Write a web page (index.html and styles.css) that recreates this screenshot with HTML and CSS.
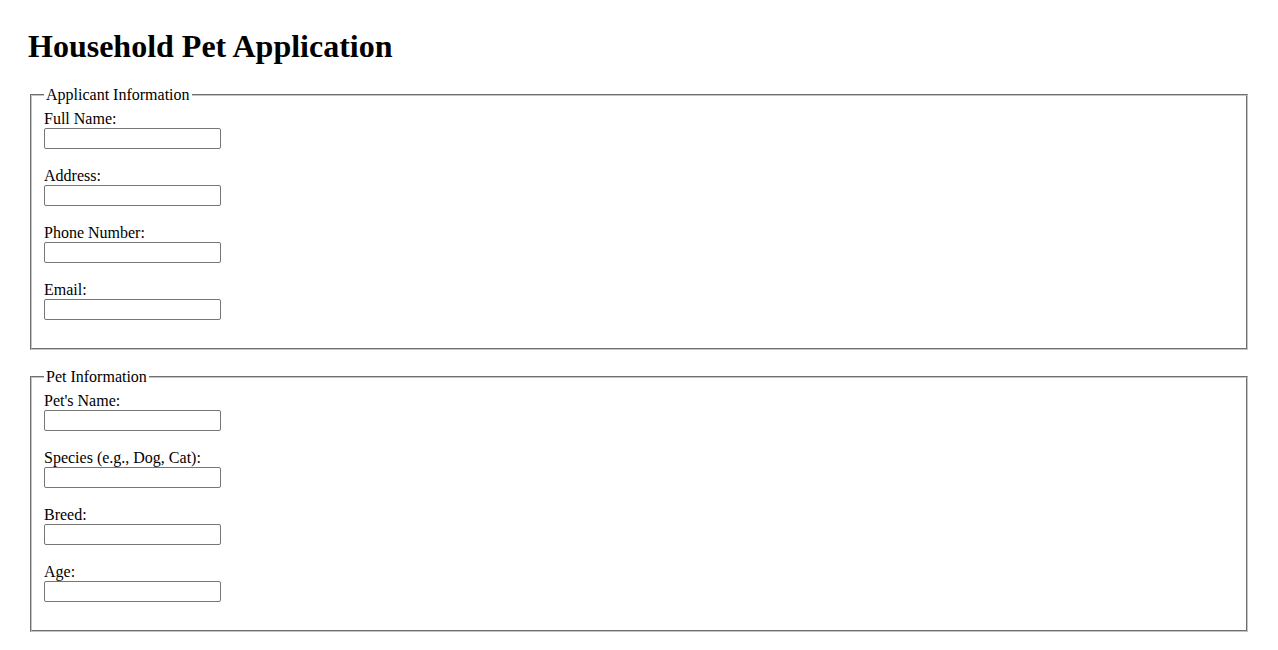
FILE: index.html
```html
<!DOCTYPE html>
<html lang="en">
<head>
<meta charset="utf-8">
<title>Household Pet Application</title>
<link rel="stylesheet" href="styles.css">
</head>
<body class="page">
<h1 class="title">Household Pet Application</h1>
<form class="form">
  <fieldset class="section">
    <legend class="section-legend">Applicant Information</legend>
    <div class="field"><label class="field-label" for="fullname">Full Name:</label><input class="field-input" type="text" id="fullname"></div>
    <div class="field"><label class="field-label" for="address">Address:</label><input class="field-input" type="text" id="address"></div>
    <div class="field"><label class="field-label" for="phone">Phone Number:</label><input class="field-input" type="text" id="phone"></div>
    <div class="field"><label class="field-label" for="email">Email:</label><input class="field-input" type="text" id="email"></div>
  </fieldset>
  <fieldset class="section">
    <legend class="section-legend">Pet Information</legend>
    <div class="field"><label class="field-label" for="petname">Pet's Name:</label><input class="field-input" type="text" id="petname"></div>
    <div class="field"><label class="field-label" for="species">Species (e.g., Dog, Cat):</label><input class="field-input" type="text" id="species"></div>
    <div class="field"><label class="field-label" for="breed">Breed:</label><input class="field-input" type="text" id="breed"></div>
    <div class="field"><label class="field-label" for="age">Age:</label><input class="field-input" type="text" id="age"></div>
  </fieldset>
</form>
</body>
</html>
```

FILE: styles.css
```css
html { background: #fff; }
.page {
  margin: 0;
  padding: 28px 28px 0;
  font-family: "Liberation Serif", "Times New Roman", serif;
  font-size: 16px;
  color: #000;
}
.title {
  font-size: 32px;
  font-weight: bold;
  margin: 0 0 21px;
}
.form { margin: 0; }
.section {
  margin: 0 2px 18px;
  padding: 6px 12px 10px;
  border: 2px groove #c4c4c4;
  min-width: 0;
}
.section-legend {
  padding: 0 2px;
}
.field {
  display: flex;
  flex-direction: column;
  align-items: flex-start;
  margin-bottom: 18px;
}
.field-label {
  line-height: 18px;
}
.field-input {
  box-sizing: border-box;
  width: 177px;
  height: 21px;
  margin: 0;
  padding: 1px 2px;
  border: 1px solid #767676;
  border-radius: 2px;
  background: #fff;
  font-family: "Liberation Sans", Arial, sans-serif;
  font-size: 13.33px;
}
```
